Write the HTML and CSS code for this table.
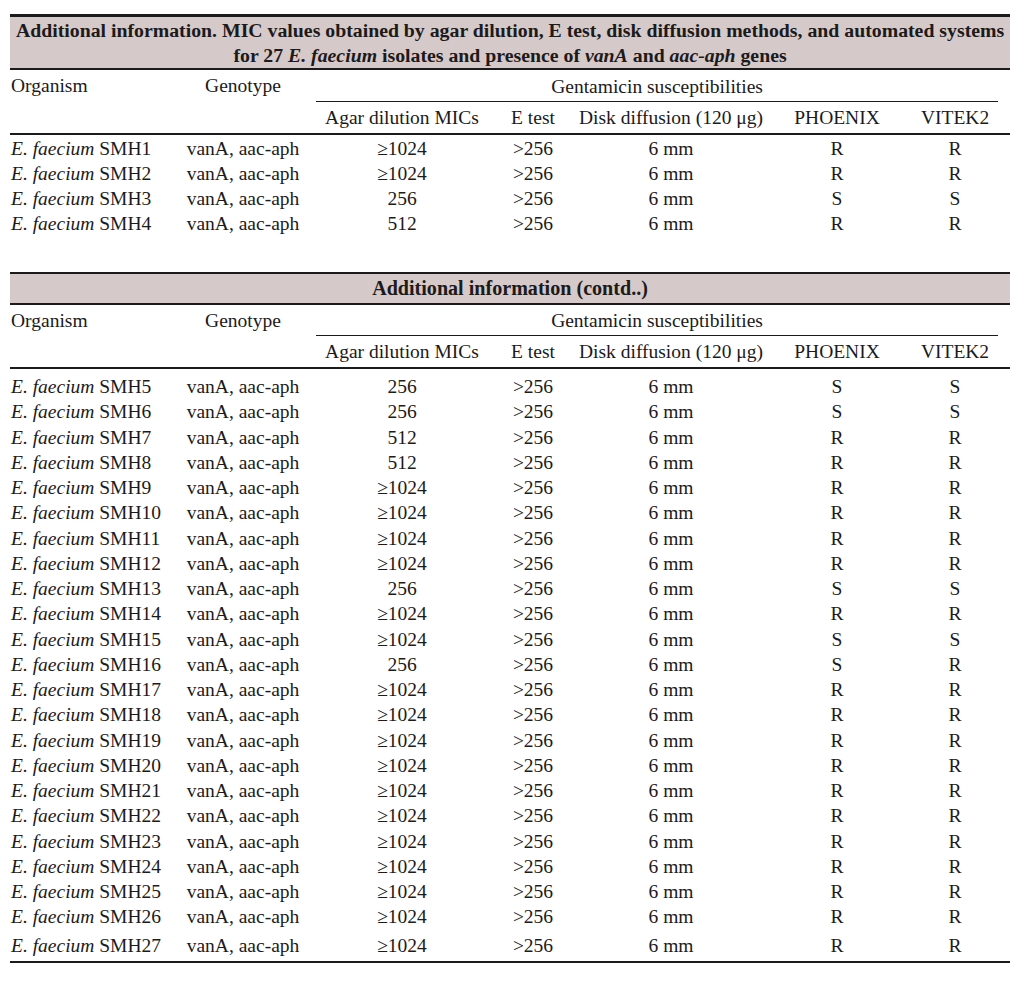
FILE: index.html
```html
<!DOCTYPE html>
<html>
<head>
<meta charset="utf-8">
<link rel="stylesheet" href="styles.css">
</head>
<body>
<div class="page">
<table class="tbl tbl-main">
  <colgroup>
    <col class="c-org"><col class="c-gen"><col class="c-agar"><col class="c-et"><col class="c-disk"><col class="c-ph"><col class="c-vi">
  </colgroup>
  <thead>
    <tr><th colspan="7" class="cap cap-two">Additional information. MIC values obtained by agar dilution, E test, disk diffusion methods, and automated systems<br>for 27 <i>E. faecium</i> isolates and presence of <i>vanA</i> and <i>aac-aph</i> genes</th></tr>
    <tr>
      <th rowspan="2" class="h-org">Organism</th>
      <th rowspan="2" class="h-gen">Genotype</th>
      <th colspan="5" class="h-span"><div class="span-line">Gentamicin susceptibilities</div></th>
    </tr>
    <tr class="sub">
      <th>Agar dilution MICs</th><th>E test</th><th>Disk diffusion (120 μg)</th><th>PHOENIX</th><th>VITEK2</th>
    </tr>
  </thead>
  <tbody>
    <tr><td><i>E. faecium</i> SMH1</td><td>vanA, aac-aph</td><td>≥1024</td><td>&gt;256</td><td>6 mm</td><td>R</td><td>R</td></tr>
    <tr><td><i>E. faecium</i> SMH2</td><td>vanA, aac-aph</td><td>≥1024</td><td>&gt;256</td><td>6 mm</td><td>R</td><td>R</td></tr>
    <tr><td><i>E. faecium</i> SMH3</td><td>vanA, aac-aph</td><td>256</td><td>&gt;256</td><td>6 mm</td><td>S</td><td>S</td></tr>
    <tr><td><i>E. faecium</i> SMH4</td><td>vanA, aac-aph</td><td>512</td><td>&gt;256</td><td>6 mm</td><td>R</td><td>R</td></tr>
  </tbody>
</table>

<table class="tbl tbl-contd">
  <colgroup>
    <col class="c-org"><col class="c-gen"><col class="c-agar"><col class="c-et"><col class="c-disk"><col class="c-ph"><col class="c-vi">
  </colgroup>
  <thead>
    <tr><th colspan="7" class="cap cap-one">Additional information (contd..)</th></tr>
    <tr>
      <th rowspan="2" class="h-org">Organism</th>
      <th rowspan="2" class="h-gen">Genotype</th>
      <th colspan="5" class="h-span"><div class="span-line">Gentamicin susceptibilities</div></th>
    </tr>
    <tr class="sub">
      <th>Agar dilution MICs</th><th>E test</th><th>Disk diffusion (120 μg)</th><th>PHOENIX</th><th>VITEK2</th>
    </tr>
  </thead>
  <tbody>
    <tr class="first"><td><i>E. faecium</i> SMH5</td><td>vanA, aac-aph</td><td>256</td><td>&gt;256</td><td>6 mm</td><td>S</td><td>S</td></tr>
    <tr><td><i>E. faecium</i> SMH6</td><td>vanA, aac-aph</td><td>256</td><td>&gt;256</td><td>6 mm</td><td>S</td><td>S</td></tr>
    <tr><td><i>E. faecium</i> SMH7</td><td>vanA, aac-aph</td><td>512</td><td>&gt;256</td><td>6 mm</td><td>R</td><td>R</td></tr>
    <tr><td><i>E. faecium</i> SMH8</td><td>vanA, aac-aph</td><td>512</td><td>&gt;256</td><td>6 mm</td><td>R</td><td>R</td></tr>
    <tr><td><i>E. faecium</i> SMH9</td><td>vanA, aac-aph</td><td>≥1024</td><td>&gt;256</td><td>6 mm</td><td>R</td><td>R</td></tr>
    <tr><td><i>E. faecium</i> SMH10</td><td>vanA, aac-aph</td><td>≥1024</td><td>&gt;256</td><td>6 mm</td><td>R</td><td>R</td></tr>
    <tr><td><i>E. faecium</i> SMH11</td><td>vanA, aac-aph</td><td>≥1024</td><td>&gt;256</td><td>6 mm</td><td>R</td><td>R</td></tr>
    <tr><td><i>E. faecium</i> SMH12</td><td>vanA, aac-aph</td><td>≥1024</td><td>&gt;256</td><td>6 mm</td><td>R</td><td>R</td></tr>
    <tr><td><i>E. faecium</i> SMH13</td><td>vanA, aac-aph</td><td>256</td><td>&gt;256</td><td>6 mm</td><td>S</td><td>S</td></tr>
    <tr><td><i>E. faecium</i> SMH14</td><td>vanA, aac-aph</td><td>≥1024</td><td>&gt;256</td><td>6 mm</td><td>R</td><td>R</td></tr>
    <tr><td><i>E. faecium</i> SMH15</td><td>vanA, aac-aph</td><td>≥1024</td><td>&gt;256</td><td>6 mm</td><td>S</td><td>S</td></tr>
    <tr><td><i>E. faecium</i> SMH16</td><td>vanA, aac-aph</td><td>256</td><td>&gt;256</td><td>6 mm</td><td>S</td><td>R</td></tr>
    <tr><td><i>E. faecium</i> SMH17</td><td>vanA, aac-aph</td><td>≥1024</td><td>&gt;256</td><td>6 mm</td><td>R</td><td>R</td></tr>
    <tr><td><i>E. faecium</i> SMH18</td><td>vanA, aac-aph</td><td>≥1024</td><td>&gt;256</td><td>6 mm</td><td>R</td><td>R</td></tr>
    <tr><td><i>E. faecium</i> SMH19</td><td>vanA, aac-aph</td><td>≥1024</td><td>&gt;256</td><td>6 mm</td><td>R</td><td>R</td></tr>
    <tr><td><i>E. faecium</i> SMH20</td><td>vanA, aac-aph</td><td>≥1024</td><td>&gt;256</td><td>6 mm</td><td>R</td><td>R</td></tr>
    <tr><td><i>E. faecium</i> SMH21</td><td>vanA, aac-aph</td><td>≥1024</td><td>&gt;256</td><td>6 mm</td><td>R</td><td>R</td></tr>
    <tr><td><i>E. faecium</i> SMH22</td><td>vanA, aac-aph</td><td>≥1024</td><td>&gt;256</td><td>6 mm</td><td>R</td><td>R</td></tr>
    <tr><td><i>E. faecium</i> SMH23</td><td>vanA, aac-aph</td><td>≥1024</td><td>&gt;256</td><td>6 mm</td><td>R</td><td>R</td></tr>
    <tr><td><i>E. faecium</i> SMH24</td><td>vanA, aac-aph</td><td>≥1024</td><td>&gt;256</td><td>6 mm</td><td>R</td><td>R</td></tr>
    <tr><td><i>E. faecium</i> SMH25</td><td>vanA, aac-aph</td><td>≥1024</td><td>&gt;256</td><td>6 mm</td><td>R</td><td>R</td></tr>
    <tr><td><i>E. faecium</i> SMH26</td><td>vanA, aac-aph</td><td>≥1024</td><td>&gt;256</td><td>6 mm</td><td>R</td><td>R</td></tr>
    <tr class="last"><td><i>E. faecium</i> SMH27</td><td>vanA, aac-aph</td><td>≥1024</td><td>&gt;256</td><td>6 mm</td><td>R</td><td>R</td></tr>
  </tbody>
</table>
</div>
</body>
</html>
```

FILE: styles.css
```css
html, body {
  margin: 0;
  padding: 0;
  background: #ffffff;
}

.page {
  padding: 14px 0 0 10px;
  font-family: "Liberation Serif", "Times New Roman", serif;
  font-size: 19.5px;
  color: #1c1a1a;
}

.tbl {
  width: 1000px;
  table-layout: fixed;
  border-collapse: separate;
  border-spacing: 0;
}

.tbl-main {
  margin-bottom: 37px;
}

.c-org { width: 170px; }
.c-gen { width: 126px; }
.c-agar { width: 192px; }
.c-et { width: 70px; }
.c-disk { width: 206px; }
.c-ph { width: 126px; }
.c-vi { width: 110px; }

.tbl th,
.tbl td {
  padding: 0;
  font-weight: normal;
  text-align: center;
  white-space: nowrap;
  line-height: 25px;
  vertical-align: top;
}

.tbl th.cap {
  background: #d6c9c9;
  font-weight: bold;
  font-size: 19.8px;
  text-align: center;
  border-bottom: 2px solid #1c1a1a;
}

.tbl th.cap-two {
  border-top: 3px solid #1c1a1a;
  padding: 1px 0 0;
}

.tbl th.cap-one {
  font-size: 20.1px;
  border-top: 2px solid #1c1a1a;
  padding: 2px 0;
}

.tbl th.h-org {
  text-align: left;
  padding: 3px 0 0 1px;
  border-bottom: 2px solid #1c1a1a;
}

.tbl th.h-gen {
  padding-top: 3px;
  border-bottom: 2px solid #1c1a1a;
}

.tbl th.h-span {
  padding-top: 3px;
}

.span-line {
  margin: 0 12px 0 10px;
  padding-bottom: 2px;
  border-bottom: 1px solid #1c1a1a;
}

.tbl-main th.h-span {
  padding-top: 4px;
}

.tbl .sub th {
  padding: 3px 0;
  border-bottom: 2px solid #1c1a1a;
}

.tbl td:first-child {
  text-align: left;
  padding-left: 1px;
}

.tbl-main td {
  line-height: 23px;
  padding-top: 2px;
}

.tbl-contd td {
  line-height: 25.25px;
}

.tbl-contd .first td {
  padding-top: 5px;
}

.tbl-contd .last td {
  padding-top: 3px;
  padding-bottom: 3px;
  border-bottom: 2px solid #1c1a1a;
}
```
